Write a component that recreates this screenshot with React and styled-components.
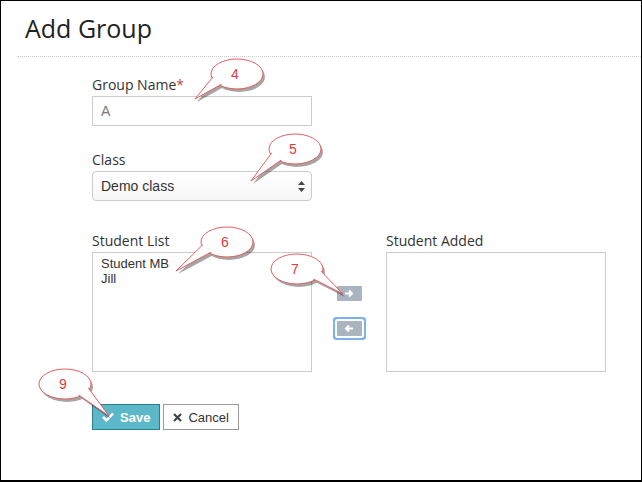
import React from "react";
import styled, { createGlobalStyle } from "styled-components";

const Global = createGlobalStyle`
  html, body { margin: 0; padding: 0; background: #fff; }
  body { font-family: "Open Sans", "Liberation Sans", sans-serif; }
`;

const Frame = styled.div`
  position: relative;
  width: 640px;
  height: 479px;
  border: 1px solid #000;
  border-bottom-width: 2px;
  overflow: hidden;
  background: #fff;
`;

const Title = styled.h1`
  margin: 0;
  padding: 10px 0 0 24px;
  height: 45px;
  box-sizing: border-box;
  height: 55px;
  font-weight: 400;
  font-size: 25px;
  color: #222;
`;

const Divider = styled.div`
  margin-left: 16px;
  border-top: 1px dotted #ccc;
`;

const Form = styled.div`
  padding: 18px 0 0 91px;
  display: flex;
  flex-direction: column;
`;

const Label = styled.label`
  display: block;
  font-size: 14px;
  color: #333;
  margin-bottom: 2px;
  span { color: #b94a48; }
`;

const Field = styled.div`
  margin-bottom: ${(p) => p.$gap || 0}px;
`;

const Input = styled.div`
  width: 220px;
  height: 30px;
  border: 1px solid #ccc;
  box-sizing: border-box;
  font-family: "Liberation Sans", sans-serif;
  font-size: 14px;
  color: #777;
  padding-left: 8px;
  display: flex;
  align-items: center;
`;

const Select = styled(Input)`
  border-radius: 4px;
  color: #333;
  justify-content: space-between;
  padding-right: 6px;
  background: linear-gradient(#fff, #f7f7f7);
`;

const Lists = styled.div`
  display: flex;
  align-items: flex-start;
`;

const ListCol = styled.div`
  display: flex;
  flex-direction: column;
`;

const ListBox = styled.div`
  width: 220px;
  height: 120px;
  border: 1px solid #ccc;
  padding: 3px 8px;
  box-sizing: border-box;
  font-family: "Liberation Sans", sans-serif;
  font-size: 13px;
  color: #333;
  line-height: 15px;
`;

const Arrows = styled.div`
  width: 74px;
  display: flex;
  flex-direction: column;
  align-items: center;
  padding-top: 55px;
  gap: 17px;
`;

const ArrowBtn = styled.div`
  width: 25px;
  height: 15px;
  background: #a9b4bf;
  color: #fff;
  display: flex;
  align-items: center;
  justify-content: center;
  border-radius: 1px;
  box-shadow: ${(p) => (p.$focus ? "0 0 0 2px #fff, 0 0 0 4px #7fb0ee" : "none")};
  margin-top: ${(p) => (p.$focus ? 3 : 0)}px;
`;

const Buttons = styled.div`
  display: flex;
  gap: 3px;
  margin-top: 32px;
`;

const Button = styled.div`
  height: 24px;
  padding: 0 9px;
  display: flex;
  align-items: center;
  gap: 6px;
  font-family: "Liberation Sans", sans-serif;
  font-size: 13px;
  border: 1px solid ${(p) => (p.$primary ? "#2c7d8c" : "#999")};
  background: ${(p) => (p.$primary ? "#5cb8c8" : "#fff")};
  color: ${(p) => (p.$primary ? "#fff" : "#333")};
  font-weight: ${(p) => (p.$primary ? 700 : 400)};
`;

const CalloutWrap = styled.svg`
  position: absolute;
  left: 0;
  top: 0;
  pointer-events: none;
`;

const Callout = ({ cx, cy, tx, ty, n }) => {
  const a = Math.atan2(ty - cy, tx - cx);
  const w = 0.35;
  const p1 = [cx + 24 * Math.cos(a - w), cy + 13 * Math.sin(a - w)];
  const p2 = [cx + 24 * Math.cos(a + w), cy + 13 * Math.sin(a + w)];
  const d = `M${p1[0]},${p1[1]} L${tx},${ty} L${p2[0]},${p2[1]}`;
  return (
    <g>
      <g transform="translate(2,3)" opacity="0.35">
        <ellipse cx={cx} cy={cy} rx="26" ry="15" fill="#000" />
        <path d={d} fill="#000" />
      </g>
      <ellipse cx={cx} cy={cy} rx="26" ry="15" fill="#fff" stroke="#e06060" strokeWidth="1" />
      <path d={d} fill="#fff" stroke="#e06060" strokeWidth="1" />
      <ellipse cx={cx} cy={cy} rx="24" ry="13" fill="#fff" />
      <text x={cx - 6} y={cy + 5} fontSize="14" fill="#e03a3a" fontFamily="Liberation Sans, sans-serif">{n}</text>
    </g>
  );
};

export default function App() {
  return (
    <Frame>
      <Global />
      <Title>Add Group</Title>
      <Divider />
      <Form>
        <Field $gap={24}>
          <Label>Group Name<span>*</span></Label>
          <Input>A</Input>
        </Field>
        <Field $gap={30}>
          <Label>Class</Label>
          <Select>
            Demo class
            <svg width="7" height="11" viewBox="0 0 7 11"><path d="M3.5 0L7 4H0z M0 7h7L3.5 11z" fill="#444" /></svg>
          </Select>
        </Field>
        <Lists>
          <ListCol>
            <Label>Student List</Label>
            <ListBox>Student MB<br />Jill</ListBox>
          </ListCol>
          <Arrows>
            <ArrowBtn>
              <svg width="10" height="9" viewBox="0 0 10 9"><path d="M1 4.5h7M5 1.5l3 3-3 3" stroke="#fff" strokeWidth="2" fill="none" /></svg>
            </ArrowBtn>
            <ArrowBtn $focus>
              <svg width="10" height="9" viewBox="0 0 10 9"><path d="M9 4.5H2M5 1.5l-3 3 3 3" stroke="#fff" strokeWidth="2" fill="none" /></svg>
            </ArrowBtn>
          </Arrows>
          <ListCol>
            <Label>Student Added</Label>
            <ListBox />
          </ListCol>
        </Lists>
        <Buttons>
          <Button $primary>
            <svg width="12" height="10" viewBox="0 0 12 10"><path d="M1 5l3.5 3.5L11 1.5" stroke="#fff" strokeWidth="2.5" fill="none" /></svg>
            Save
          </Button>
          <Button>
            <svg width="9" height="9" viewBox="0 0 9 9"><path d="M1 1l7 7M8 1L1 8" stroke="#444" strokeWidth="2.2" /></svg>
            Cancel
          </Button>
        </Buttons>
      </Form>
      <CalloutWrap width="640" height="479">
        <Callout cx={236} cy={73} tx={194} ty={98} n="4" />
        <Callout cx={294} cy={148} tx={250} ty={180} n="5" />
        <Callout cx={226} cy={241} tx={175} ty={270} n="6" />
        <Callout cx={296} cy={268} tx={342} ty={293} n="7" />
        <Callout cx={64} cy={383} tx={108} ty={415} n="9" />
      </CalloutWrap>
    </Frame>
  );
}
